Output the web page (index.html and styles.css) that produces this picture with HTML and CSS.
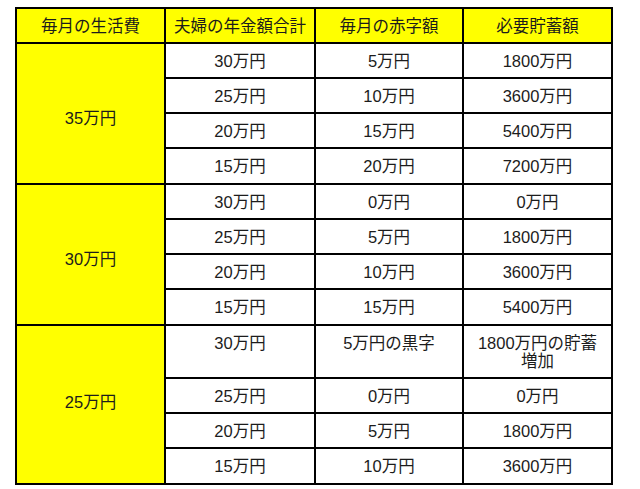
FILE: index.html
```html
<!DOCTYPE html>
<html lang="ja">
<head>
<meta charset="utf-8">
<title>生活費と必要貯蓄額</title>
<link rel="stylesheet" href="styles.css">
</head>
<body>
<table class="plan">
  <colgroup>
    <col class="c1"><col class="c2"><col class="c3"><col class="c4">
  </colgroup>
  <thead>
    <tr>
      <th>毎月の生活費</th>
      <th>夫婦の年金額合計</th>
      <th>毎月の赤字額</th>
      <th>必要貯蓄額</th>
    </tr>
  </thead>
  <tbody>
    <tr><td class="cost up" rowspan="4">35万円</td><td>30万円</td><td>5万円</td><td>1800万円</td></tr>
    <tr><td>25万円</td><td>10万円</td><td>3600万円</td></tr>
    <tr><td>20万円</td><td>15万円</td><td>5400万円</td></tr>
    <tr><td>15万円</td><td>20万円</td><td>7200万円</td></tr>
    <tr><td class="cost up" rowspan="4">30万円</td><td>30万円</td><td>0万円</td><td>0万円</td></tr>
    <tr><td>25万円</td><td>5万円</td><td>1800万円</td></tr>
    <tr><td>20万円</td><td>10万円</td><td>3600万円</td></tr>
    <tr><td>15万円</td><td>15万円</td><td>5400万円</td></tr>
    <tr><td class="cost down" rowspan="4">25万円</td><td>30万円</td><td>5万円の黒字</td><td>1800万円の貯蓄増加</td></tr>
    <tr><td>25万円</td><td>0万円</td><td>0万円</td></tr>
    <tr><td>20万円</td><td>5万円</td><td>1800万円</td></tr>
    <tr><td>15万円</td><td>10万円</td><td>3600万円</td></tr>
  </tbody>
</table>
</body>
</html>
```

FILE: styles.css
```css
html, body {
  margin: 0;
  padding: 0;
  background: #ffffff;
}

.plan {
  margin: 7px 0 0 15px;
  border-collapse: collapse;
  table-layout: fixed;
  width: 598px;
  font-family: "Liberation Sans", "Noto Sans CJK JP", sans-serif;
  font-size: 16.5px;
  color: #1c1c1c;
}

.c1 { width: 149px; }
.c2 { width: 150px; }
.c3 { width: 148px; }
.c4 { width: 149px; }

.plan th,
.plan td {
  border: 2px solid #000000;
  text-align: center;
  vertical-align: top;
  line-height: 18px;
  padding: 8px 8px 7.25px;
  font-weight: normal;
}

.plan th {
  background: #ffff00;
  padding: 8px 4px 6.5px;
}

.plan td.cost {
  background: #ffff00;
  vertical-align: middle;
}

.plan td.cost.up {
  padding-top: 18px;
}

.plan td.cost.down {
  padding-bottom: 13px;
}
```
